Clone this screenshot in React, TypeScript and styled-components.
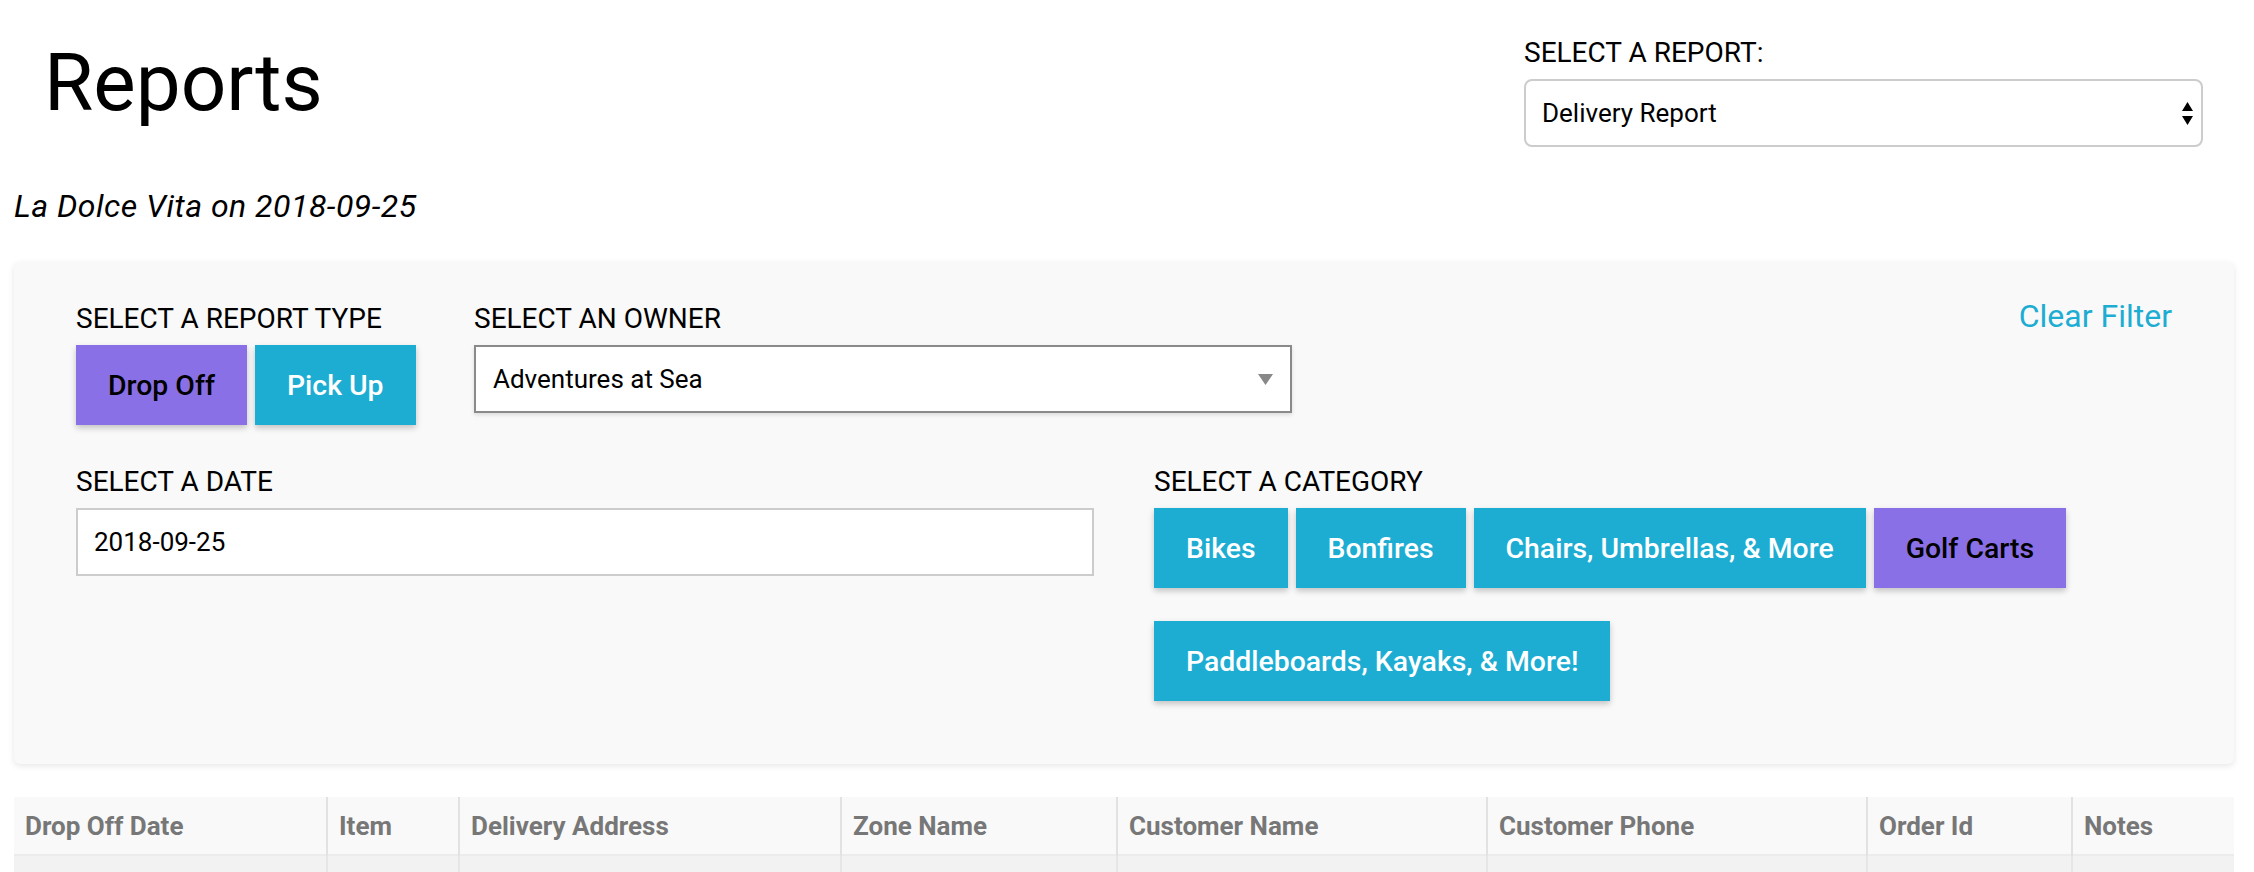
import React from "react";
import styled, { createGlobalStyle } from "styled-components";

const GlobalStyle = createGlobalStyle`
  html, body { margin: 0; padding: 0; background: #ffffff; }
  body { font-family: Roboto, "Noto Sans", "Liberation Sans", sans-serif; color: #000; }
  * { box-sizing: border-box; }
`;

const CYAN = "#1dadd3";
const PURPLE = "#8a70e6";

const Page = styled.div`
  padding: 0 20px 0 14px;
`;

const Header = styled.header`
  display: flex;
  justify-content: space-between;
  align-items: flex-start;
  padding-top: 36px;
`;

const TitleBlock = styled.div`
  display: flex;
  flex-direction: column;
`;

const Title = styled.h1`
  margin: 0 0 0 30px;
  font-size: 80px;
  font-weight: 400;
  line-height: 94px;
`;

const Subtitle = styled.p`
  margin: 57px 0 0 0;
  font-size: 32px;
  letter-spacing: 0.5px;
  font-style: italic;
  line-height: 38px;
`;

const ReportPicker = styled.div`
  width: 679px;
  margin-right: 31px;
  display: flex;
  flex-direction: column;
`;

const PickerLabel = styled.div`
  font-size: 28px;
  line-height: 33px;
  margin-bottom: 10px;
`;

const RoundSelect = styled.div`
  height: 68px;
  border: 2px solid #cccccc;
  border-radius: 8px;
  background: #fff;
  display: flex;
  align-items: center;
  justify-content: space-between;
  padding: 0 8px 0 16px;
  font-size: 26px;
`;

const Panel = styled.section`
  margin-top: 37px;
  background: #f9f9f9;
  border-radius: 6px;
  box-shadow: 0 2px 6px rgba(0, 0, 0, 0.1);
  padding: 40px 62px 63px;
`;

const TopRow = styled.div`
  display: flex;
  align-items: flex-start;
`;

const Field = styled.div<{ $width?: number; $gap?: number }>`
  display: flex;
  flex-direction: column;
  ${(p) => (p.$width ? `width: ${p.$width}px;` : "")}
  ${(p) => (p.$gap ? `margin-right: ${p.$gap}px;` : "")}
`;

const Label = styled.div`
  font-size: 28px;
  line-height: 33px;
  margin-bottom: 10px;
  white-space: nowrap;
`;

const ButtonGroup = styled.div<{ $wrap?: boolean }>`
  display: flex;
  flex-wrap: ${(p) => (p.$wrap ? "wrap" : "nowrap")};
  gap: 33px 8px;
`;

const ToggleButton = styled.button<{ $active?: boolean }>`
  height: 80px;
  padding: 0 32px;
  border: none;
  border-radius: 0;
  background: ${(p) => (p.$active ? PURPLE : CYAN)};
  color: ${(p) => (p.$active ? "#000" : "#fff")};
  font-family: Roboto, "Liberation Sans", sans-serif;
  font-size: 28.4px;
  font-weight: 500;
  box-shadow: 0 3px 6px rgba(0, 0, 0, 0.22);
  cursor: pointer;
  white-space: nowrap;
  flex-shrink: 0;
`;

const SquareSelect = styled.div`
  height: 68px;
  border: 2px solid #8a8a8a;
  background: #fff;
  display: flex;
  align-items: center;
  justify-content: space-between;
  padding: 0 17px 0 17px;
  font-size: 26px;
  box-shadow: 0 2px 4px rgba(0, 0, 0, 0.12);
`;

const ClearFilter = styled.a`
  margin-left: auto;
  margin-top: -4px;
  font-size: 32px;
  line-height: 37px;
  color: ${CYAN};
  cursor: pointer;
`;

const BottomRow = styled.div`
  display: grid;
  grid-template-columns: 1fr 1fr;
  column-gap: 60px;
  margin-top: 40px;
`;

const TextInput = styled.div`
  height: 68px;
  border: 2px solid #cccccc;
  background: #fff;
  display: flex;
  align-items: center;
  padding-left: 16px;
  font-size: 26px;
`;

const Table = styled.table`
  margin-top: 33px;
  width: 100%;
  border-collapse: collapse;
  table-layout: fixed;
`;

const Th = styled.th<{ $first?: boolean }>`
  height: 58px;
  background: #f9f9f9;
  text-align: left;
  padding: 0 0 0 11px;
  font-size: 26px;
  font-weight: 700;
  color: #777;
  white-space: nowrap;
  border-left: ${(p) => (p.$first ? "none" : "2px solid #e2e2e2")};
`;

const Td = styled.td<{ $first?: boolean }>`
  height: 40px;
  background: #f2f2f2;
  border-top: 2px solid #ececec;
  border-left: ${(p) => (p.$first ? "none" : "2px solid #e6e6e6")};
`;

const columns: [string, number][] = [
  ["Drop Off Date", 313],
  ["Item", 132],
  ["Delivery Address", 382],
  ["Zone Name", 276],
  ["Customer Name", 370],
  ["Customer Phone", 380],
  ["Order Id", 205],
  ["Notes", 162],
];

const categories: { name: string; active?: boolean }[] = [
  { name: "Bikes" },
  { name: "Bonfires" },
  { name: "Chairs, Umbrellas, & More" },
  { name: "Golf Carts", active: true },
  { name: "Paddleboards, Kayaks, & More!" },
];

const UpDownArrows = () => (
  <svg width="11" height="23" viewBox="0 0 11 23">
    <polygon points="5.5,0 11,9 0,9" fill="#000" />
    <polygon points="0,14 11,14 5.5,23" fill="#000" />
  </svg>
);

const DownArrow = () => (
  <svg width="15" height="11" viewBox="0 0 15 11">
    <polygon points="0,0 15,0 7.5,11" fill="#888" />
  </svg>
);

export default function App() {
  return (
    <>
      <GlobalStyle />
      <Page>
        <Header>
          <TitleBlock>
            <Title>Reports</Title>
            <Subtitle>La Dolce Vita on 2018-09-25</Subtitle>
          </TitleBlock>
          <ReportPicker>
            <PickerLabel>SELECT A REPORT:</PickerLabel>
            <RoundSelect>
              <span>Delivery Report</span>
              <UpDownArrows />
            </RoundSelect>
          </ReportPicker>
        </Header>

        <Panel>
          <TopRow>
            <Field $width={338} $gap={60}>
              <Label>SELECT A REPORT TYPE</Label>
              <ButtonGroup>
                <ToggleButton $active>Drop Off</ToggleButton>
                <ToggleButton>Pick Up</ToggleButton>
              </ButtonGroup>
            </Field>
            <Field $width={818}>
              <Label>SELECT AN OWNER</Label>
              <SquareSelect>
                <span>Adventures at Sea</span>
                <DownArrow />
              </SquareSelect>
            </Field>
            <ClearFilter>Clear Filter</ClearFilter>
          </TopRow>

          <BottomRow>
            <Field>
              <Label>SELECT A DATE</Label>
              <TextInput>2018-09-25</TextInput>
            </Field>
            <Field>
              <Label>SELECT A CATEGORY</Label>
              <ButtonGroup $wrap>
                {categories.map((c) => (
                  <ToggleButton key={c.name} $active={c.active}>
                    {c.name}
                  </ToggleButton>
                ))}
              </ButtonGroup>
            </Field>
          </BottomRow>
        </Panel>

        <Table>
          <colgroup>
            {columns.map(([name, w]) => (
              <col key={name} style={{ width: w }} />
            ))}
          </colgroup>
          <thead>
            <tr>
              {columns.map(([name], i) => (
                <Th key={name} $first={i === 0}>
                  {name}
                </Th>
              ))}
            </tr>
          </thead>
          <tbody>
            <tr>
              {columns.map(([name], i) => (
                <Td key={name} $first={i === 0} />
              ))}
            </tr>
          </tbody>
        </Table>
      </Page>
    </>
  );
}
